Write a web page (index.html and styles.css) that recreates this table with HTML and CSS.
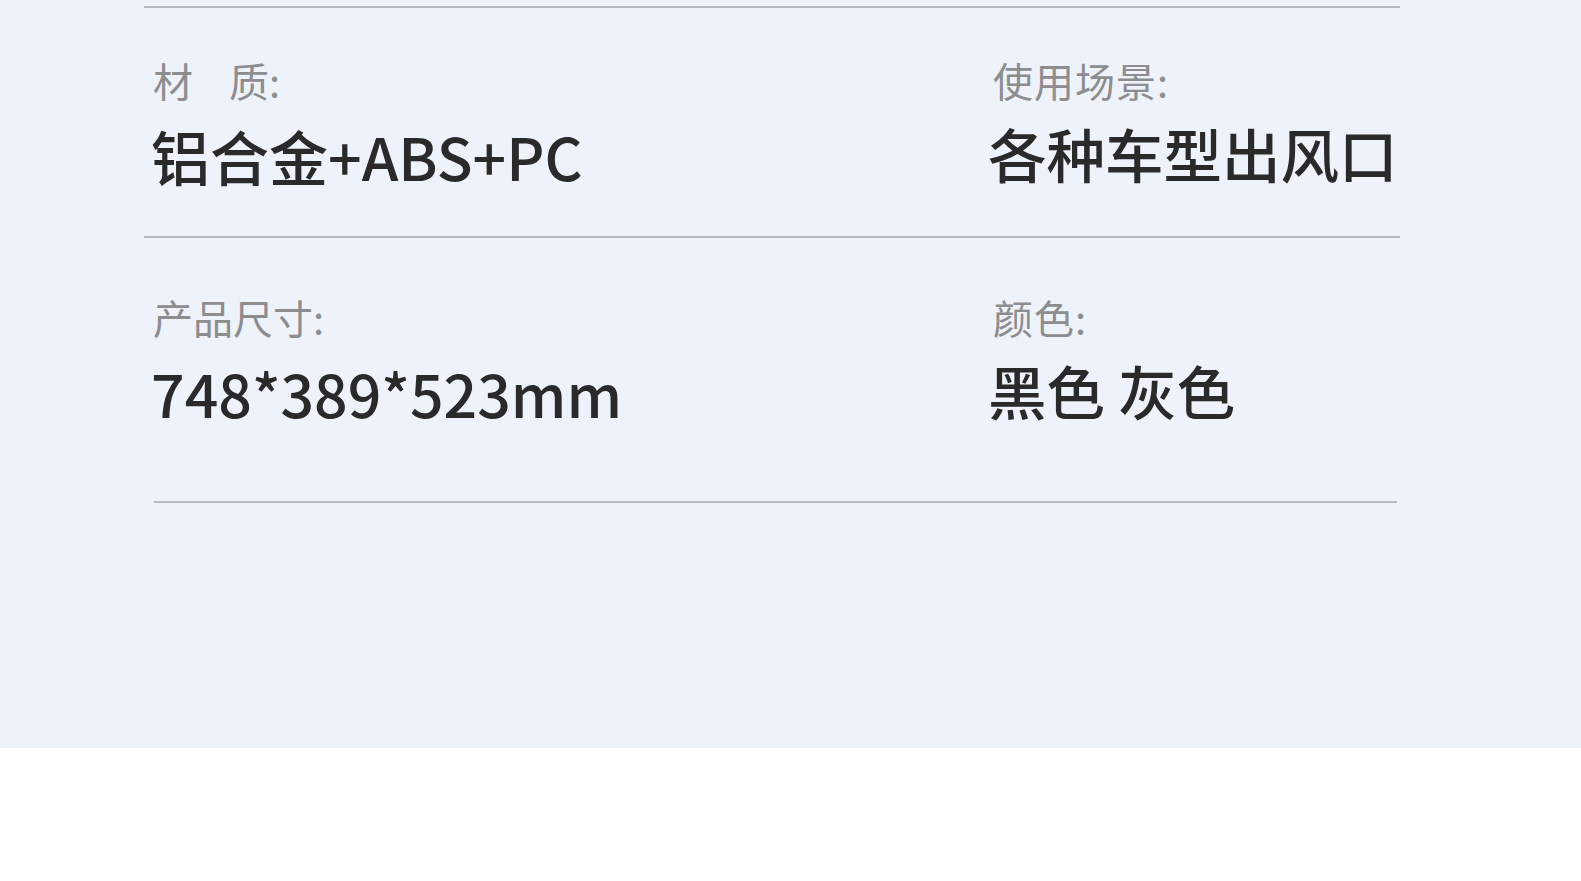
FILE: index.html
```html
<!DOCTYPE html>
<html lang="zh-CN">
<head>
<meta charset="utf-8">
<title>产品参数</title>
<link rel="stylesheet" href="styles.css">
</head>
<body>
<div class="panel">
  <div class="specs">
    <div class="divider"></div>
    <div class="row row-first">
      <div class="cell">
        <div class="label">材<span class="gap"></span>质:</div>
        <div class="value">铝合金+ABS+PC</div>
      </div>
      <div class="cell cell-right">
        <div class="label">使用场景:</div>
        <div class="value">各种车型出风口</div>
      </div>
    </div>
    <div class="divider"></div>
    <div class="row row-second">
      <div class="cell">
        <div class="label">产品尺寸:</div>
        <div class="value">748*389*523mm</div>
      </div>
      <div class="cell cell-right">
        <div class="label">颜色:</div>
        <div class="value">黑色 灰色</div>
      </div>
    </div>
    <div class="divider divider-short"></div>
  </div>
</div>
</body>
</html>
```

FILE: styles.css
```css
html, body {
  margin: 0;
  padding: 0;
  background: #ffffff;
}

body {
  font-family: "Noto Sans CJK SC", "Noto Sans", sans-serif;
}

.panel {
  background: #eef2fa;
  height: 748px;
  padding-top: 6px;
  box-sizing: border-box;
}

.specs {
  margin-left: 144px;
  width: 1256px;
}

.divider {
  height: 2px;
  background: #b6bac1;
}

.divider-short {
  margin-left: 10px;
  margin-right: 3px;
}

.row {
  display: grid;
  grid-template-columns: 837px 1fr;
  padding-left: 9px;
}

.row-first {
  padding-top: 49px;
  padding-bottom: 45px;
}

.row-second {
  padding-top: 56px;
  padding-bottom: 73px;
}

.cell {
  display: flex;
  flex-direction: column;
  gap: 18px;
}

.cell-right {
  gap: 15px;
}

.label {
  font-size: 40px;
  line-height: 46px;
  color: #8d8d8f;
  white-space: nowrap;
}

.gap {
  display: inline-block;
  width: 36px;
}

.cell-right .label {
  margin-left: 3px;
  letter-spacing: 1px;
}

.value {
  font-size: 59px;
  line-height: 70px;
  font-weight: 500;
  color: #2b2a2b;
  white-space: nowrap;
  margin-left: -2px;
}

.cell-right .value {
  font-size: 58.5px;
}
```
